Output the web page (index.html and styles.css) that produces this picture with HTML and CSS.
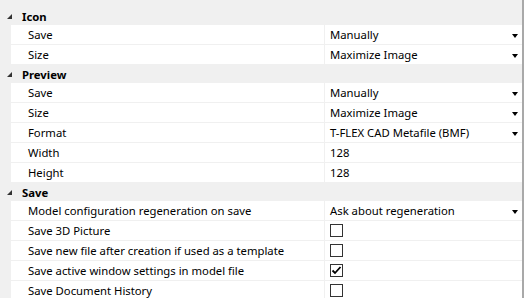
FILE: index.html
```html
<!DOCTYPE html>
<html lang="en">
<head>
    <meta charset="UTF-8">
    <title>Properties</title>
    <link rel="stylesheet" href="styles.css">
</head>
<body>
    <div class="grid">
        <div class="category">
            <div class="cat-header"><span class="expander"></span>Icon</div>
            <div class="row">
                <div class="label">Save</div>
                <div class="value">Manually<span class="arrow"></span></div>
            </div>
            <div class="row">
                <div class="label">Size</div>
                <div class="value">Maximize Image<span class="arrow"></span></div>
            </div>
        </div>

        <div class="category">
            <div class="cat-header"><span class="expander"></span>Preview</div>
            <div class="row">
                <div class="label">Save</div>
                <div class="value">Manually<span class="arrow"></span></div>
            </div>
            <div class="row">
                <div class="label">Size</div>
                <div class="value">Maximize Image<span class="arrow"></span></div>
            </div>
            <div class="row">
                <div class="label">Format</div>
                <div class="value">T-FLEX CAD Metafile (BMF)<span class="arrow"></span></div>
            </div>
            <div class="row">
                <div class="label">Width</div>
                <div class="value">128</div>
            </div>
            <div class="row">
                <div class="label">Height</div>
                <div class="value">128</div>
            </div>
        </div>

        <div class="category">
            <div class="cat-header"><span class="expander"></span>Save</div>
            <div class="row">
                <div class="label">Model configuration regeneration on save</div>
                <div class="value">Ask about regeneration<span class="arrow"></span></div>
            </div>
            <div class="row">
                <div class="label">Save 3D Picture</div>
                <div class="value"><span class="checkbox"></span></div>
            </div>
            <div class="row">
                <div class="label">Save new file after creation if used as a template</div>
                <div class="value"><span class="checkbox"></span></div>
            </div>
            <div class="row">
                <div class="label">Save active window settings in model file</div>
                <div class="value">
                    <span class="checkbox">
                        <svg width="11" height="11" viewBox="0 0 11 11"><path d="M1.5 5.5 L4 8 L9.5 2" fill="none" stroke="#000" stroke-width="1.8"/></svg>
                    </span>
                </div>
            </div>
            <div class="row">
                <div class="label">Save Document History</div>
                <div class="value"><span class="checkbox"></span></div>
            </div>
        </div>
    </div>
</body>
</html>
```

FILE: styles.css
```css
body {
    margin: 0;
    padding: 0;
    background-color: #fff;
    font-family: "Noto Sans", "Open Sans", sans-serif;
    font-size: 11.3px;
    color: #000;
}

.grid {
    width: 522px;
    padding-top: 7px;
    background-color: #f0f0f0;
    border-right: 2px solid #a9a9a9;
    overflow: hidden;
}

.cat-header {
    display: flex;
    align-items: center;
    height: 18px;
    font-weight: bold;
}

.expander {
    width: 0;
    height: 0;
    margin: 0 10px 0 7px;
    border-left: 5px solid transparent;
    border-bottom: 5px solid #333;
}

.row {
    display: flex;
    height: 19px;
    margin-left: 11px;
    background-color: #fff;
    border-bottom: 1px solid #f0f0f0;
}

.label {
    width: 296px;
    padding-left: 17px;
    display: flex;
    align-items: center;
    white-space: nowrap;
    border-right: 1px solid #f0f0f0;
}

.value {
    flex: 1;
    display: flex;
    align-items: center;
    justify-content: space-between;
    padding: 0 4px 0 5px;
    white-space: nowrap;
}

.arrow {
    width: 0;
    height: 0;
    margin-top: 2px;
    border-left: 3px solid transparent;
    border-right: 3px solid transparent;
    border-top: 4px solid #000;
}

.checkbox {
    width: 11px;
    height: 11px;
    border: 1px solid #333;
    display: flex;
    align-items: center;
    justify-content: center;
    background-color: #fff;
}
```
